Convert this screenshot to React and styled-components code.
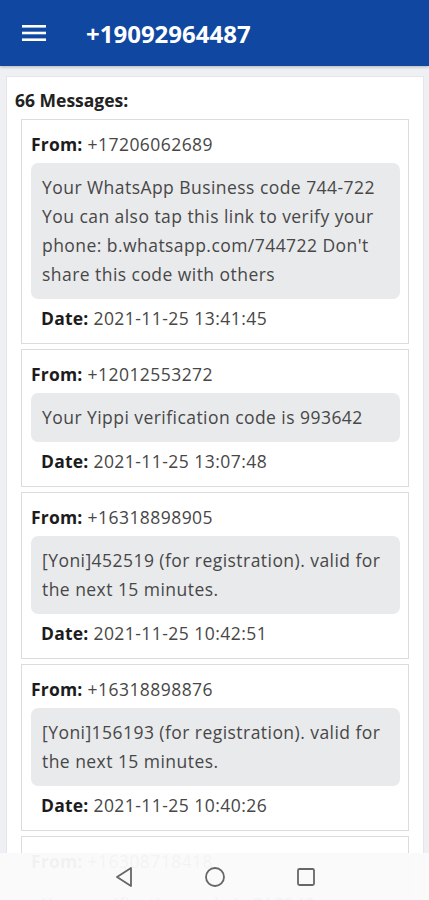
import React from 'react';
import styled, {createGlobalStyle} from 'styled-components';

const GlobalStyle = createGlobalStyle`
  body {
    margin: 0;
    background: #eef0f3;
    font-family: "Open Sans", Lato, sans-serif;
    color: #3a3a3a;
  }
`

const messages = [
    {from: '+17206062689', text: "Your WhatsApp Business code 744-722 You can also tap this link to verify your phone: b.whatsapp.com/744722 Don't share this code with others", date: '2021-11-25 13:41:45'},
    {from: '+12012553272', text: 'Your Yippi verification code is 993642', date: '2021-11-25 13:07:48'},
    {from: '+16318898905', text: '[Yoni]452519 (for registration). valid for the next 15 minutes.', date: '2021-11-25 10:42:51'},
    {from: '+16318898876', text: '[Yoni]156193 (for registration). valid for the next 15 minutes.', date: '2021-11-25 10:40:26'},
    {from: '+16308718418', text: 'Your verification code is 318240', date: '2021-11-25 10:31:02'},
]

const Screen = styled.div`
  height: 100vh;
  display: flex;
  flex-direction: column;
  overflow: hidden;
`

const Header = styled.header`
  flex: none;
  height: 66px;
  background: #0f47a1;
  display: flex;
  align-items: center;
  padding-left: 22px;
  gap: 40px;
  box-shadow: 0 1px 3px rgba(0,0,0,0.25);
`

const Title = styled.h1`
  margin: 0;
  color: #fff;
  font-size: 24px;
  font-weight: 700;
`

const Main = styled.main`
  flex: 1;
  overflow: hidden;
  padding: 10px 5px 0 6px;
`

const Panel = styled.section`
  background: #fff;
  border: 1px solid #e4e6e9;
  padding: 11px 14px 60px 8px;
`

const Count = styled.div`
  font-weight: 700;
  font-size: 17.5px;
  line-height: 24px;
  color: #222;
  margin-bottom: 7px;
`

const List = styled.div`
  display: flex;
  flex-direction: column;
  gap: 5px;
  margin-left: 6px;
`

const Card = styled.div`
  border: 1px solid #dcdcdc;
  padding: 12px 8px 13px 9px;
`

const Line = styled.div`
  font-size: 17.5px;
  letter-spacing: 0.45px;
  line-height: 24px;
  color: #474747;
  padding-left: ${p => p.indent ? '10px' : '0'};
  b { color: #1c1c1c; font-weight: 700; letter-spacing: 0.2px; }
`

const Bubble = styled.div`
  background: #e9eaec;
  border-radius: 7px;
  margin: 7px 0 7px;
  padding: 10px 10px 10px 11px;
  font-size: 17.5px;
  letter-spacing: 0.45px;
  line-height: 29px;
  color: #474747;
`

const NavBar = styled.nav`
  position: fixed;
  left: 0;
  right: 0;
  bottom: 0;
  height: 47px;
  background: rgba(250,250,250,0.96);
  display: flex;
  justify-content: center;
  align-items: center;
  gap: 70px;
`

const App = () => {
    return (
        <Screen>
            <GlobalStyle/>
            <Header>
                <svg width="24" height="16" viewBox="0 0 24 16">
                    <rect x="0" y="0" width="24" height="2.6" fill="#fff"/>
                    <rect x="0" y="6.7" width="24" height="2.6" fill="#fff"/>
                    <rect x="0" y="13.4" width="24" height="2.6" fill="#fff"/>
                </svg>
                <Title>+19092964487</Title>
            </Header>
            <Main>
                <Panel>
                    <Count>66 Messages:</Count>
                    <List>
                        {messages.map((m, i) => (
                            <Card key={i}>
                                <Line><b>From:</b> {m.from}</Line>
                                <Bubble>{m.text}</Bubble>
                                <Line indent><b>Date:</b> {m.date}</Line>
                            </Card>
                        ))}
                    </List>
                </Panel>
            </Main>
            <NavBar>
                <svg width="20" height="22" viewBox="0 0 20 22">
                    <path d="M17 2 L3 11 L17 20 Z" fill="none" stroke="#666" strokeWidth="1.8" strokeLinejoin="round"/>
                </svg>
                <svg width="22" height="22" viewBox="0 0 22 22">
                    <circle cx="11" cy="11" r="9" fill="none" stroke="#666" strokeWidth="1.8"/>
                </svg>
                <svg width="20" height="20" viewBox="0 0 20 20">
                    <rect x="2" y="2" width="16" height="16" rx="1.5" fill="none" stroke="#666" strokeWidth="1.8"/>
                </svg>
            </NavBar>
        </Screen>
    );
};

export default App;
